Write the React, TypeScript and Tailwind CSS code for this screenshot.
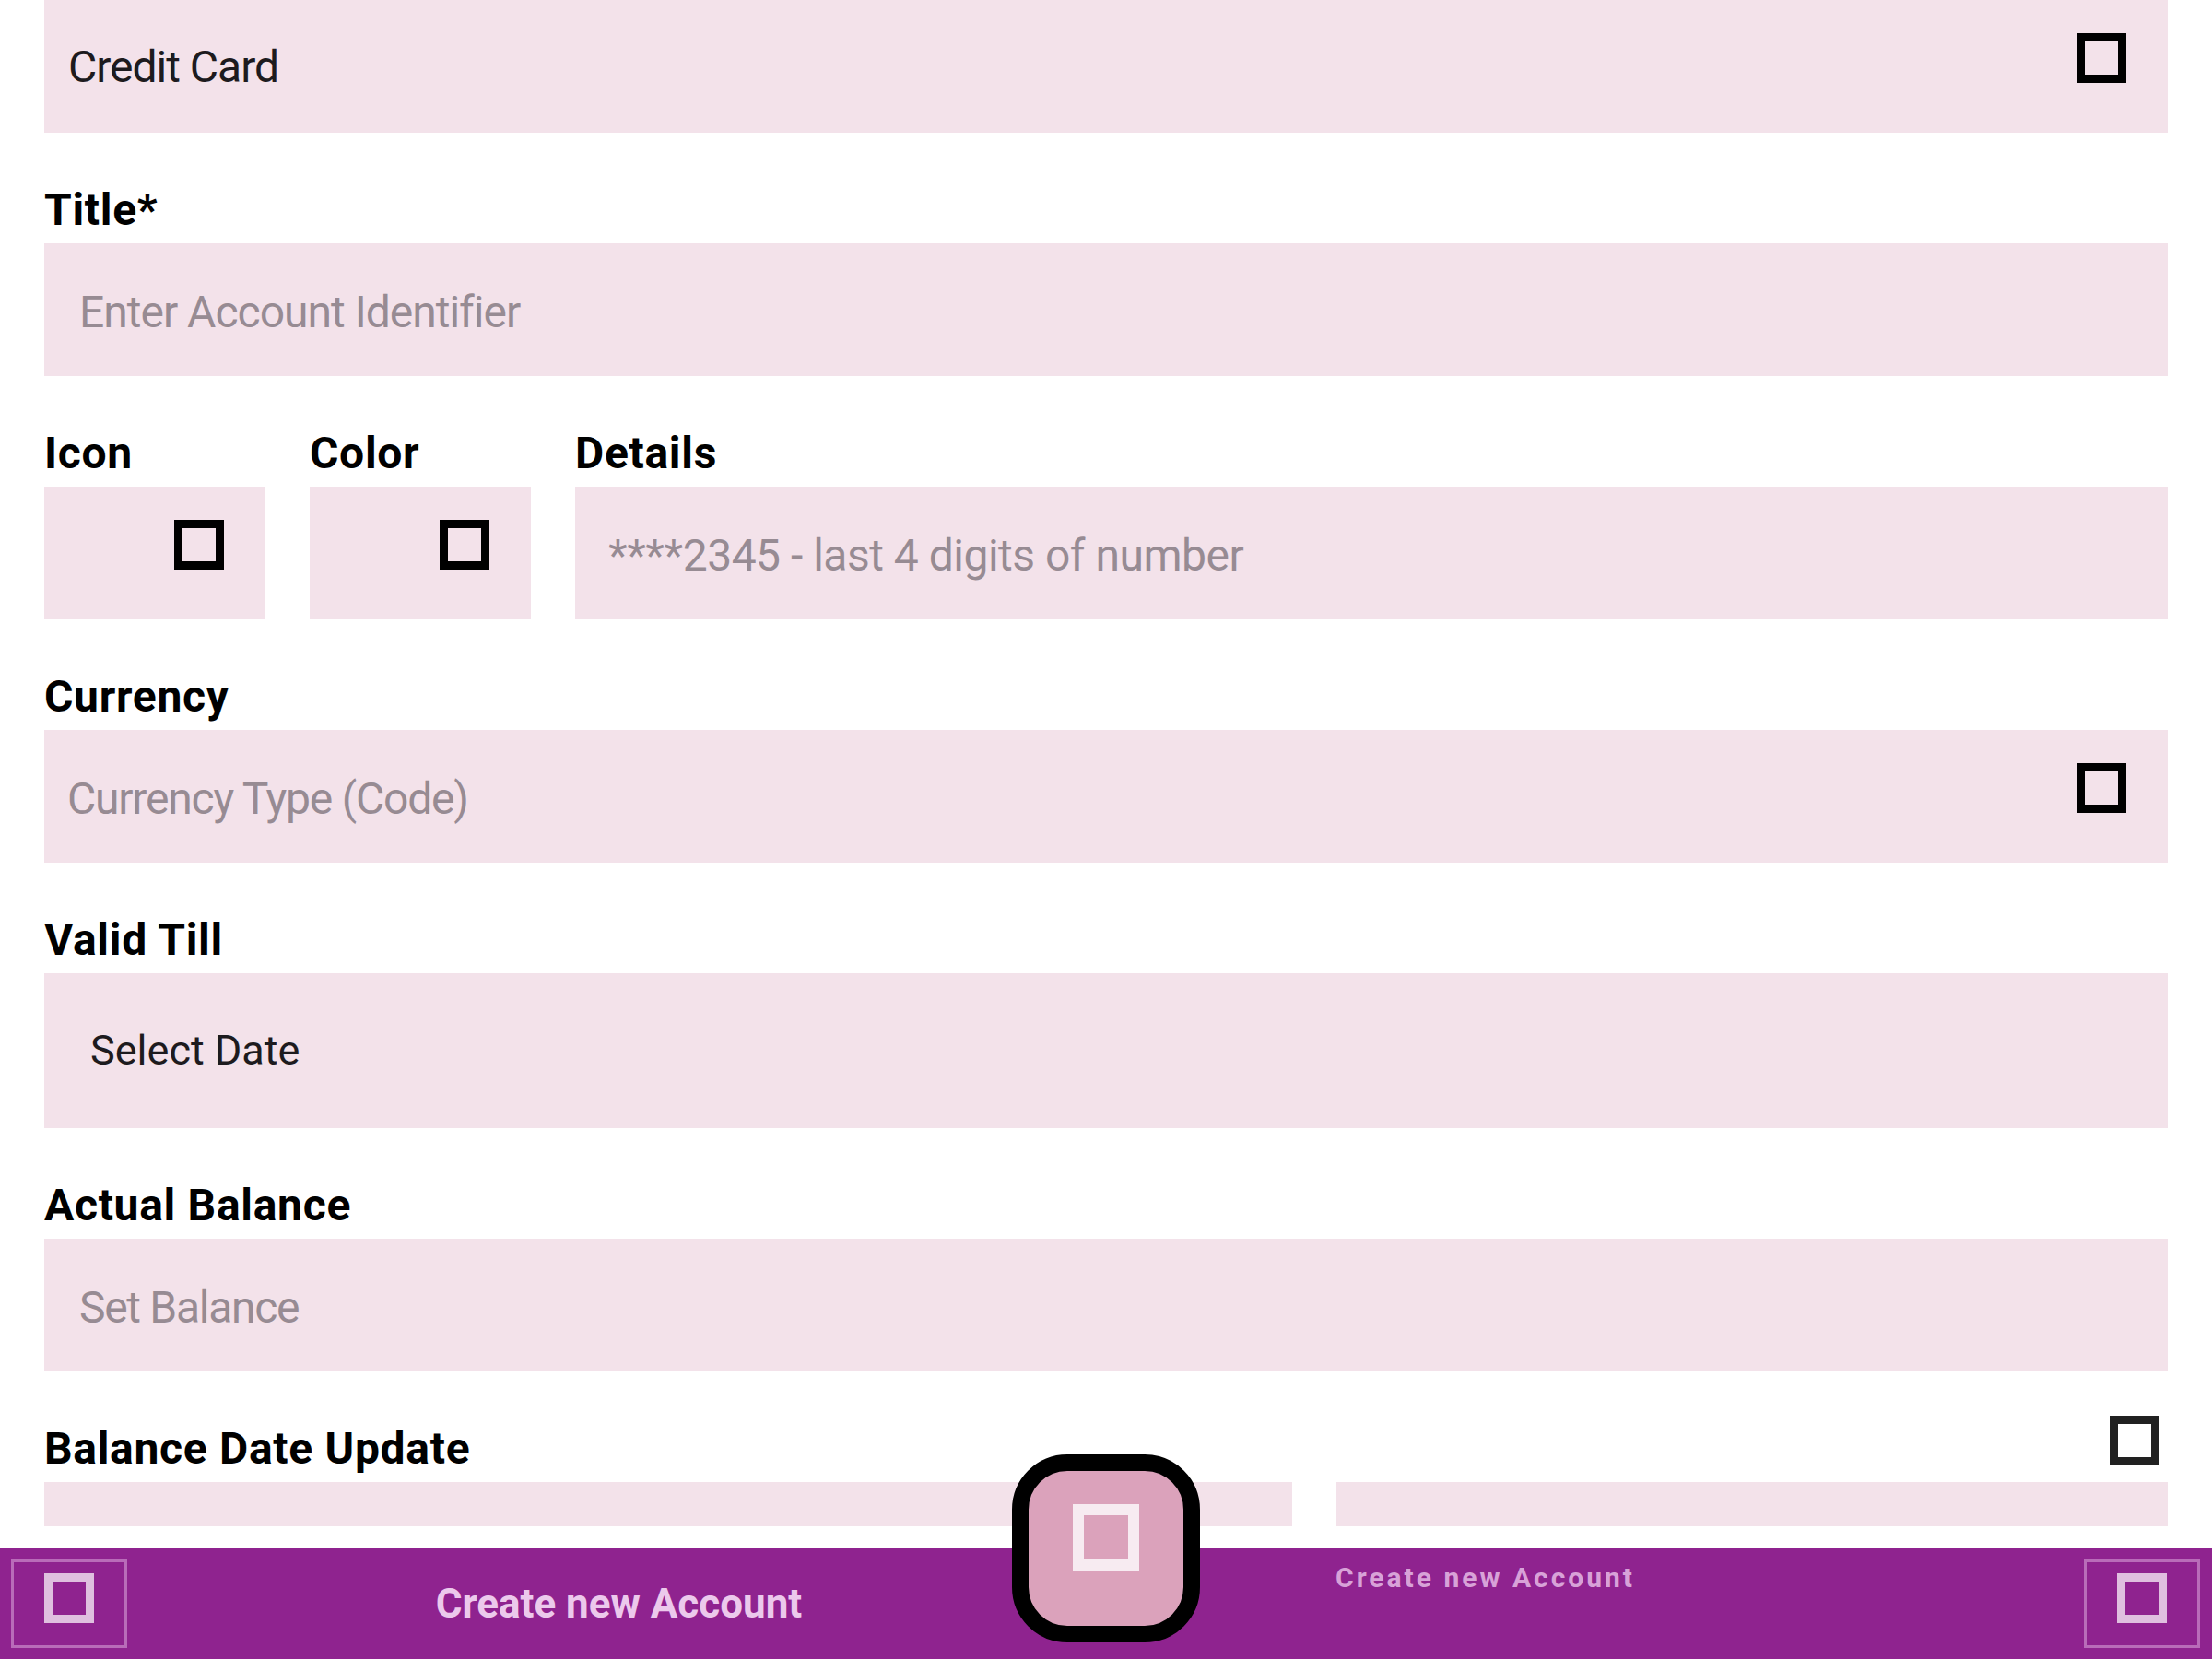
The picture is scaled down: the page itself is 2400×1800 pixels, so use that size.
import type { ReactNode } from "react";

/* ---------- bits ---------- */

function Tofu({ className }: { className: string }) {
  return <span className={"block shrink-0 " + className} />;
}

function Label({ children, className = "" }: { children: ReactNode; className?: string }) {
  return (
    <div
      className={
        "h-[56px] text-[48px] font-bold leading-[56px] tracking-[0.7px] text-black " + className
      }
    >
      {children}
    </div>
  );
}

function Field({
  children,
  className = "",
}: {
  children?: ReactNode;
  className?: string;
}) {
  return <div className={"flex items-center bg-[#f3e2ea] " + className}>{children}</div>;
}

function Placeholder({ children, className = "tracking-[-1px]" }: { children: ReactNode; className?: string }) {
  return <span className={"pt-[6px] text-[48px] text-[#978b93] " + className}>{children}</span>;
}

const boxIcon = "mb-[18px] h-[54px] w-[54px] border-[9px] border-black";

/* ---------- page ---------- */

export default function App() {
  return (
    <div className="relative h-[1800px] w-[2400px] overflow-hidden bg-white font-['Roboto',sans-serif]">
      <div className="flex h-[1680px] flex-col px-[48px]">
        <Field className="h-[144px] justify-between pl-[26px] pr-[45px]">
          <span className="pt-[2px] text-[48px] tracking-[-1px] text-[#1d1b1e]">Credit Card</span>
          <Tofu className={boxIcon} />
        </Field>

        <Label className="mt-[56px] mb-[8px]">Title*</Label>
        <Field className="h-[144px] pl-[38px]">
          <Placeholder>Enter Account Identifier</Placeholder>
        </Field>

        <div className="mt-[56px] flex gap-[48px]">
          <div className="flex w-[240px] flex-col">
            <Label className="mb-[8px]">Icon</Label>
            <Field className="h-[144px] justify-end pr-[45px]">
              <Tofu className={boxIcon} />
            </Field>
          </div>
          <div className="flex w-[240px] flex-col">
            <Label className="mb-[8px]">Color</Label>
            <Field className="h-[144px] justify-end pr-[45px]">
              <Tofu className={boxIcon} />
            </Field>
          </div>
          <div className="flex flex-1 flex-col">
            <Label className="mb-[8px]">Details</Label>
            <Field className="h-[144px] pl-[36px]">
              <Placeholder className="tracking-[-0.5px]">****2345 - last 4 digits of number</Placeholder>
            </Field>
          </div>
        </div>

        <Label className="mt-[56px] mb-[8px]">Currency</Label>
        <Field className="h-[144px] justify-between pl-[25px] pr-[45px]">
          <Placeholder className="tracking-[-1.2px]">Currency Type (Code)</Placeholder>
          <Tofu className={boxIcon} />
        </Field>

        <Label className="mt-[56px] mb-[8px]">Valid Till</Label>
        <Field className="h-[168px] pl-[50px]">
          <span className="text-[45px] tracking-[0px] text-[#1d1b1e]">Select Date</span>
        </Field>

        <Label className="mt-[56px] mb-[8px]">Actual Balance</Label>
        <Field className="h-[144px] pl-[38px]">
          <Placeholder className="tracking-[-1.3px]">Set Balance</Placeholder>
        </Field>

        <div className="mt-[56px] mb-[8px] flex items-start justify-between pr-[9px]">
          <Label>Balance Date Update</Label>
          <Tofu className="-mt-[8px] h-[54px] w-[54px] border-[9px] border-[#212121]" />
        </div>
        <div className="flex gap-[48px]">
          <Field className="h-[48px] flex-[3]" />
          <Field className="h-[48px] flex-[2]" />
        </div>
      </div>

      {/* bottom bar */}
      <nav className="flex h-[120px] bg-[#8f238f]">
        <div className="flex w-[1200px] items-center">
          <button className="ml-[12px] flex h-[96px] w-[126px] items-center justify-center border-[3px] border-[#b96cb9]">
            <Tofu className="mb-[12px] h-[54px] w-[54px] border-[9px] border-[#dfbfdf]" />
          </button>
          <div className="flex flex-1 justify-center pl-[5px]">
            <span className="text-[44px] font-bold leading-[52px] text-[#ecc9ec]">Create new Account</span>
          </div>
        </div>
        <div className="flex flex-1 items-center justify-between pl-[249px] pr-[13px]">
          <span className="mb-[56px] text-[30px] font-bold leading-[34px] tracking-[3px] text-[#d8a2d8]">
            Create new Account
          </span>
          <button className="flex h-[96px] w-[126px] items-center justify-center border-[3px] border-[#b96cb9]">
            <Tofu className="mb-[12px] h-[54px] w-[54px] border-[9px] border-[#dfbfdf]" />
          </button>
        </div>
      </nav>

      {/* docked FAB */}
      <button className="absolute left-[1098px] top-[1578px] flex h-[204px] w-[204px] items-center justify-center rounded-[60px] border-[18px] border-black bg-[#dba2bb]">
        <Tofu className="mb-[24px] h-[72px] w-[72px] border-[12px] border-[#f7ebf1]" />
      </button>
    </div>
  );
}
